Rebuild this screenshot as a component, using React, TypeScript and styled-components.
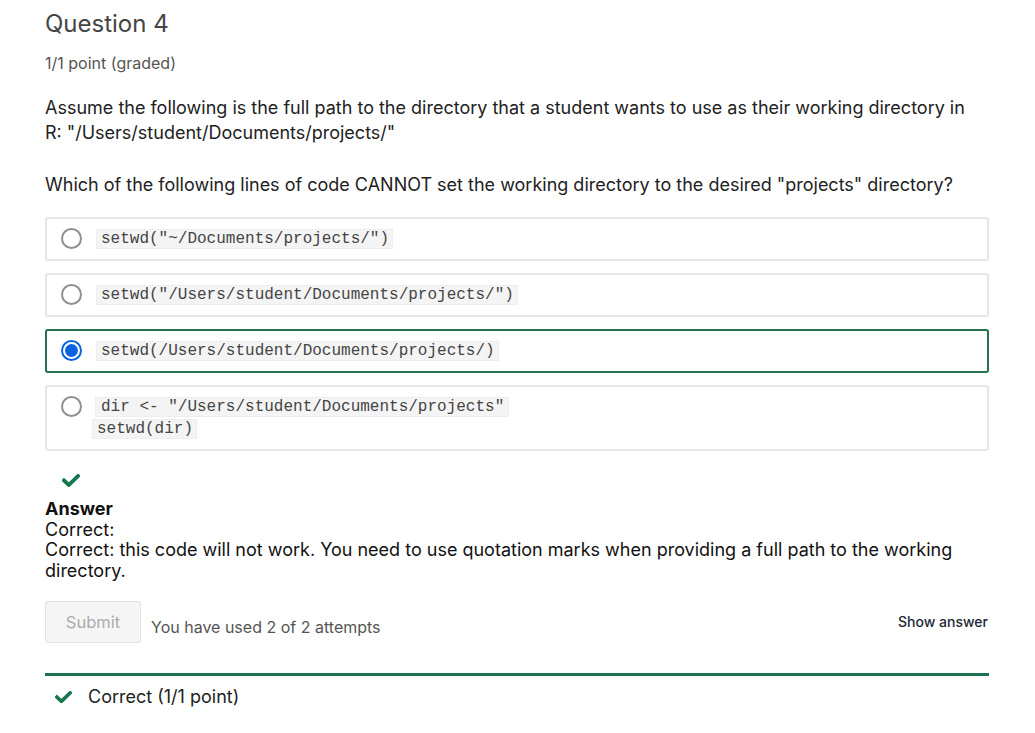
import React from "react";
import styled, { createGlobalStyle } from "styled-components";

const GlobalStyle = createGlobalStyle`
  body {
    margin: 0;
    background: #fff;
    font-family: Inter, "Noto Sans", sans-serif;
    color: #313131;
  }
`;

const Page = styled.div`
  width: 944px;
  padding: 8px 0 0 45px;
`;

const Title = styled.h3`
  margin: 0;
  font-size: 24px;
  font-weight: 400;
  line-height: 31px;
  color: #454545;
`;

const Points = styled.div`
  margin-top: 14px;
  font-size: 16px;
  line-height: 20px;
  color: #555;
`;

const Prompt = styled.p`
  margin: 22px 0 0;
  max-width: 930px;
  font-size: 18px;
  line-height: 25px;
  color: #222;
  & + & {
    margin-top: 27px;
  }
`;

const Choices = styled.div`
  margin-top: 20px;
  display: flex;
  flex-direction: column;
  gap: 12px;
`;

const Choice = styled.label<{ $selected?: boolean }>`
  display: flex;
  align-items: flex-start;
  gap: 15px;
  box-sizing: border-box;
  padding: 9px 14px 9px 14px;
  border: 2px solid ${(p) => (p.$selected ? "#24704f" : "#e6e6e6")};
  border-radius: 3px;
`;

const Radio = styled.span<{ $checked?: boolean }>`
  flex: none;
  width: 21px;
  height: 21px;
  margin-top: 0px;
  box-sizing: border-box;
  border-radius: 50%;
  border: 2px solid ${(p) => (p.$checked ? "#0b63e0" : "#8f8f8f")};
  display: flex;
  align-items: center;
  justify-content: center;
  &::after {
    content: "";
    display: ${(p) => (p.$checked ? "block" : "none")};
    width: 13px;
    height: 13px;
    border-radius: 50%;
    background: #0b63e0;
  }
`;

const CodeBlock = styled.div<{ $multi?: boolean }>`
  font-family: "Liberation Mono", "Courier New", monospace;
  font-size: 16px;
  line-height: 22px;
  color: #444;
  margin-left: ${(p) => (p.$multi ? "-5px" : "-1px")};
`;

const Code = styled.code<{ $indent?: boolean }>`
  font-family: inherit;
  background: #f4f4f4;
  border: 1px solid #eeeeee;
  padding: 0 ${(p) => (p.$indent ? "4px" : "3px")} 0 ${(p) => (p.$indent ? "5px" : "4px")};
  margin-left: ${(p) => (p.$indent ? "3px" : "0")};
`;

const Mark = styled.div`
  margin: 23px 0 0 17px;
  height: 14px;
  display: flex;
`;

const Answer = styled.div`
  margin-top: 11px;
  max-width: 930px;
  font-size: 18px;
  line-height: 20.7px;
  color: #111;
  strong {
    font-weight: 700;
    display: block;
  }
`;

const Actions = styled.div`
  margin-top: 19px;
  display: flex;
  align-items: center;
`;

const SubmitButton = styled.button`
  width: 96px;
  height: 42px;
  font-family: Inter, sans-serif;
  font-size: 16.5px;
  color: #acacac;
  background: #f5f5f5;
  border: 1px solid #e2e2e2;
  border-radius: 2px;
`;

const Attempts = styled.span`
  margin: 10px 0 0 10px;
  font-size: 16px;
  color: #555;
`;

const ShowAnswer = styled.button`
  margin-left: auto;
  margin-right: 1px;
  background: none;
  border: none;
  padding: 0;
  font-family: Inter, sans-serif;
  font-size: 14px;
  font-weight: 500;
  color: #1c2834;
`;

const Status = styled.div`
  margin-top: 30px;
  border-top: 3px solid #1d7350;
  padding: 10px 0 0 10px;
  display: flex;
  align-items: center;
  gap: 16px;
  font-size: 18px;
  line-height: 22px;
  color: #222;
`;

const Check = ({ width = 18 }: { width?: number }) => (
  <svg width={width} height={(width * 13) / 18} viewBox="0 0 18 13">
    <path d="M2 6.5 L6.8 11 L16 2" fill="none" stroke="#16784f" strokeWidth="3.8" strokeLinecap="square" />
  </svg>
);

export default function App() {
  return (
    <Page>
      <GlobalStyle />
      <Title>Question 4</Title>
      <Points>1/1 point (graded)</Points>
      <Prompt>
        Assume the following is the full path to the directory that a student wants to use as their working directory in
        R: "/Users/student/Documents/projects/"
      </Prompt>
      <Prompt>Which of the following lines of code CANNOT set the working directory to the desired "projects" directory?</Prompt>
      <Choices>
        <Choice>
          <Radio />
          <CodeBlock>
            <Code>setwd("~/Documents/projects/")</Code>
          </CodeBlock>
        </Choice>
        <Choice>
          <Radio />
          <CodeBlock>
            <Code>setwd("/Users/student/Documents/projects/")</Code>
          </CodeBlock>
        </Choice>
        <Choice $selected>
          <Radio $checked />
          <CodeBlock>
            <Code>setwd(/Users/student/Documents/projects/)</Code>
          </CodeBlock>
        </Choice>
        <Choice>
          <Radio />
          <CodeBlock $multi>
            <Code $indent>dir &lt;- "/Users/student/Documents/projects"</Code>
            <br />
            <Code>setwd(dir)</Code>
          </CodeBlock>
        </Choice>
      </Choices>
      <Mark>
        <Check />
      </Mark>
      <Answer>
        <strong>Answer</strong>
        Correct:
        <br />
        Correct: this code will not work. You need to use quotation marks when providing a full path to the working
        directory.
      </Answer>
      <Actions>
        <SubmitButton disabled>Submit</SubmitButton>
        <Attempts>You have used 2 of 2 attempts</Attempts>
        <ShowAnswer>Show answer</ShowAnswer>
      </Actions>
      <Status>
        <Check width={17} />
        Correct (1/1 point)
      </Status>
    </Page>
  );
}
